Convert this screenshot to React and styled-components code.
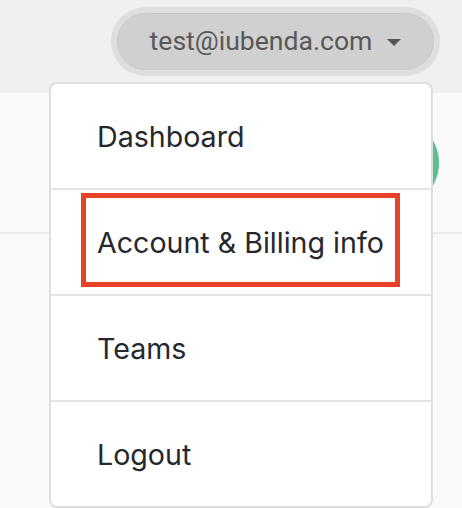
import React from "react";
import styled, { createGlobalStyle } from "styled-components";

const Global = createGlobalStyle`
  html, body { margin: 0; padding: 0; }
  body { background: #fafafa; width: 462px; height: 508px; overflow: hidden; font-family: "Roboto", sans-serif; }
`;

const Page = styled.div`
  position: relative;
  width: 462px;
  height: 508px;
  overflow: hidden;
`;

const Header = styled.header`
  height: 93px;
  background: #f0f0f0;
  display: flex;
  justify-content: flex-end;
  align-items: flex-start;
  padding: 7px 22px 0 0;
  box-sizing: border-box;
`;

const PillRing = styled.div`
  padding: 6px;
  background: #dedede;
  border-radius: 999px;
`;

const Pill = styled.button`
  width: 317px;
  height: 57px;
  box-sizing: border-box;
  border: 1px solid #c8c8c8;
  background: #d0d0d0;
  border-radius: 999px;
  display: flex;
  align-items: center;
  justify-content: center;
  gap: 15px;
  padding: 0 0 2px 0;
  font-family: "Roboto", sans-serif;
  font-size: 26.6px;
  color: #585858;
  cursor: pointer;
`;

const Caret = styled.span`
  width: 0;
  height: 0;
  border-left: 7px solid transparent;
  border-right: 7px solid transparent;
  border-top: 7px solid #555;
  margin-top: 3px;
`;

const Section = styled.section`
  height: 139px;
  border-bottom: 2px solid #ebebeb;
  display: flex;
  align-items: center;
  justify-content: flex-end;
  padding-right: 23px;
  overflow: hidden;
`;

const Avatar = styled.div`
  width: 92px;
  height: 92px;
  flex: none;
  border-radius: 50%;
  background: #5cbf8f;
`;

const Menu = styled.nav`
  position: absolute;
  left: 49px;
  top: 82px;
  width: 384px;
  box-sizing: border-box;
  background: #fff;
  border: 2px solid #dedede;
  border-radius: 8px;
  display: flex;
  flex-direction: column;
`;

const Item = styled.a`
  position: relative;
  height: 104px;
  display: flex;
  align-items: center;
  padding-left: 46px;
  font-family: "Inter", sans-serif;
  font-size: 28.6px;
  color: #25282d;
  text-decoration: none;
  & + & {
    border-top: 2px solid #e4e4e4;
  }
`;

const Highlight = styled.span`
  position: absolute;
  left: 30px;
  top: 3px;
  width: 319px;
  height: 94px;
  box-sizing: border-box;
  border: 5px solid #e8432a;
  pointer-events: none;
`;

const items = ["Dashboard", "Account & Billing info", "Teams", "Logout"];

export default function App() {
  return (
    <>
      <Global />
      <Page>
        <Header>
          <PillRing>
            <Pill>
              test@iubenda.com
              <Caret />
            </Pill>
          </PillRing>
        </Header>
        <Section>
          <Avatar />
        </Section>
        <Menu>
          {items.map((t, i) => (
            <Item key={t} href="#">
              {t}
              {i === 1 && <Highlight />}
            </Item>
          ))}
        </Menu>
      </Page>
    </>
  );
}
